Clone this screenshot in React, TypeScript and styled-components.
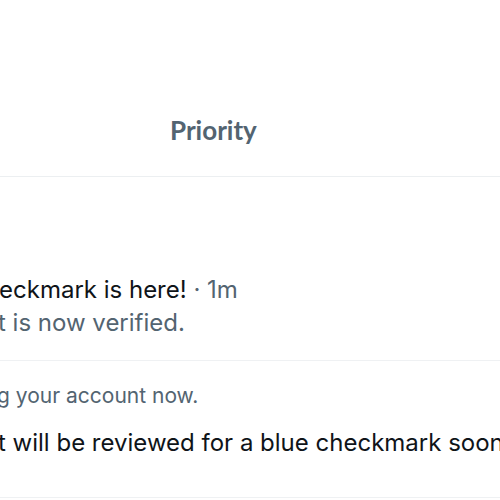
import React from "react";
import styled, { createGlobalStyle } from "styled-components";

const Global = createGlobalStyle`
  html, body { margin: 0; padding: 0; background: #ffffff; }
  body { width: 500px; height: 500px; overflow: hidden; }
`;

const Page = styled.div`
  width: 500px;
  height: 500px;
  overflow: hidden;
  background: #ffffff;
  display: flex;
  flex-direction: column;
`;

const Header = styled.div`
  height: 176px;
  display: flex;
  align-items: flex-start;
  border-bottom: 1px solid #eceff1;
  box-sizing: content-box;
`;

const Tab = styled.div`
  margin: 114px 0 0 170px;
  font-family: Lato, "Noto Sans", sans-serif;
  font-weight: 700;
  font-size: 26px;
  line-height: 32px;
  color: #536471;
`;

const Item = styled.div<{ $h: number }>`
  height: ${(p) => p.$h}px;
  border-bottom: 1px solid #eff1f3;
  display: flex;
  flex-direction: column;
  overflow: hidden;
  white-space: nowrap;
`;

const Line = styled.div<{ $size: number; $top: number; $muted?: boolean; $indent: number }>`
  font-family: Inter, "Liberation Sans", sans-serif;
  font-size: ${(p) => p.$size}px;
  line-height: ${(p) => p.$size + 6}px;
  margin-top: ${(p) => p.$top}px;
  margin-left: ${(p) => p.$indent}px;
  color: ${(p) => (p.$muted ? "#536471" : "#0f1419")};
`;

const Meta = styled.span`
  color: #536471;
`;

export default function App() {
  return (
    <Page>
      <Global />
      <Header>
        <Tab>Priority</Tab>
      </Header>
      <Item $h={183}>
        <Line $size={24} $top={98} $indent={-1}>
          eckmark is here!<Meta> · 1m</Meta>
        </Line>
        <Line $size={24} $top={3} $indent={-2} $muted>
          t is now verified.
        </Line>
      </Item>
      <Item $h={136}>
        <Line $size={21} $top={21} $indent={-3} $muted>
          g your account now.
        </Line>
        <Line $size={24} $top={19} $indent={-2}>
          t will be reviewed for a blue checkmark soon.
        </Line>
      </Item>
    </Page>
  );
}
